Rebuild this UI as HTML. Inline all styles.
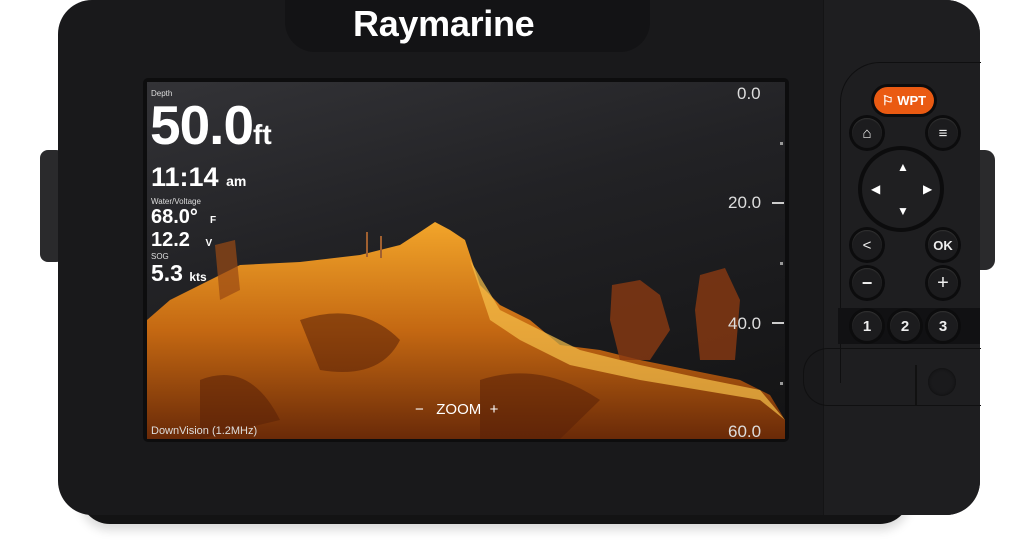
<!DOCTYPE html>
<html><head><meta charset="utf-8"><style>
body{margin:0;width:1024px;height:558px;background:#fff;position:relative;overflow:hidden;font-family:"Liberation Sans",sans-serif}
.a{position:absolute}
.btn{position:absolute;width:30px;height:30px;border-radius:50%;background:#1c1c1e;box-shadow:0 0 0 3px #0c0c0d,inset 0 1px 1px #333;color:#eee;font-weight:bold;font-size:15px;display:flex;align-items:center;justify-content:center}
.t{position:absolute;color:#fff;font-weight:bold;line-height:1}
.sc{position:absolute;color:#ddd;font-size:17px;line-height:1}
</style></head><body>
<div class="a" style="left:40px;top:150px;width:24px;height:112px;background:#2a2a2c;border-radius:8px"></div>
<div class="a" style="left:968px;top:150px;width:27px;height:120px;background:#2a2a2c;border-radius:10px"></div>
<div class="a" style="left:80px;top:480px;width:830px;height:44px;background:#131314;border-radius:0 0 30px 30px;box-shadow:0 6px 10px rgba(0,0,0,.15)"></div>
<div class="a" style="left:58px;top:0;width:922px;height:515px;background:#19191b;border-radius:34px"></div>
<div class="a" style="left:823px;top:0;width:157px;height:515px;background:#1e1e20;border-radius:0 34px 34px 0"></div>
<div class="a" style="left:823px;top:0;width:1px;height:515px;background:#141415"></div>
<div class="a" style="left:840px;top:62px;width:140px;height:320px;border-left:1px solid #0f0f10;border-top:1px solid #0f0f10;border-radius:40px 0 0 0"></div>
<div class="a" style="left:838px;top:308px;width:142px;height:36px;background:#111113"></div>
<div class="a" style="left:803px;top:348px;width:177px;height:56px;border:1px solid #101011;border-right:none;border-radius:25px 0 0 25px"></div>
<div class="a" style="left:915px;top:365px;width:2px;height:40px;background:#111"></div>
<div class="a" style="left:928px;top:368px;width:28px;height:28px;border-radius:50%;background:#1a1a1c;box-shadow:inset 0 0 3px #0c0c0c"></div>
<div class="a" style="left:285px;top:0;width:365px;height:52px;background:#131315;border-radius:0 0 30px 30px"></div>
<div class="t" style="left:353px;top:6px;font-size:36px;letter-spacing:-0.3px">Raymarine</div>
<div class="a" style="left:143px;top:78px;width:646px;height:364px;background:#0d0d0e;border-radius:5px"></div>
<div class="a" style="left:147px;top:82px;width:638px;height:357px;overflow:hidden;background:linear-gradient(165deg,#333337,#222225 40%,#131314 100%)">
<svg width="638" height="357" viewBox="147 82 638 357" style="position:absolute;left:0;top:0">
<defs><linearGradient id="g" x1="0" y1="0" x2="0" y2="1"><stop offset="0" stop-color="#f2a52a"/><stop offset=".5" stop-color="#c46812"/><stop offset="1" stop-color="#6a2a08"/></linearGradient></defs>
<path d="M147 320 L170 300 L200 285 L240 265 L300 262 L360 255 L400 245 L420 232 L435 222 L450 230 L465 240 L480 285 L500 305 L530 320 L560 345 L600 350 L640 360 L700 372 L740 380 L770 395 L785 420 L785 439 L147 439Z" fill="url(#g)"/>
<path d="M470 260 L500 310 L540 330 L580 350 L640 365 L700 378 L760 390 L785 420 L760 400 L700 390 L640 380 L570 365 L520 340 L490 320Z" fill="#f7c04a" opacity=".7"/>
<path d="M300 320 Q360 300 400 340 Q380 380 320 370Z M480 380 Q540 360 600 400 L560 439 L480 439Z M200 380 Q250 360 280 420 L200 439Z" fill="#5a2008" opacity=".55"/>
<path d="M612 285 L640 280 L660 295 L670 330 L650 360 L620 360 L610 320Z M700 275 L725 268 L740 300 L735 360 L700 360 L695 310Z" fill="#8a3a12" opacity=".8"/>
<path d="M215 245 L235 240 L240 290 L220 300Z" fill="#9a4a14" opacity=".7"/>
<rect x="366" y="232" width="2" height="25" fill="#a06030"/><rect x="380" y="236" width="2" height="22" fill="#a06030"/>
</svg>
<div class="a" style="left:4px;top:7px;color:#ddd;font-size:8px">Depth</div>
<div class="t" style="left:3px;top:16px;font-size:55px;letter-spacing:-1px">50.0<span style="font-size:28px;letter-spacing:0">ft</span></div>
<div class="t" style="left:4px;top:82px;font-size:27px">11:14 <span style="font-size:14px">am</span></div>
<div class="a" style="left:4px;top:115px;color:#ddd;font-size:8px">Water/Voltage</div>
<div class="t" style="left:4px;top:125px;font-size:20px">68.0°<span style="font-size:10px;margin-left:12px">F</span></div>
<div class="t" style="left:4px;top:148px;font-size:20px">12.2 <span style="font-size:10px;margin-left:10px">V</span></div>
<div class="a" style="left:4px;top:170px;color:#ddd;font-size:8px">SOG</div>
<div class="t" style="left:4px;top:180px;font-size:23px">5.3 <span style="font-size:12px">kts</span></div>
<div class="a" style="left:4px;top:343px;color:#ddd;font-size:11px">DownVision (1.2MHz)</div>
<div class="t" style="left:268px;top:320px;font-size:15px;font-weight:normal">−&nbsp;&nbsp;&nbsp;ZOOM&nbsp;&nbsp;+</div>
<div class="sc" style="top:3px;left:590px">0.0</div>
<div class="sc" style="top:112px;left:581px">20.0</div>
<div class="sc" style="top:233px;left:581px">40.0</div>
<div class="sc" style="top:341px;left:581px">60.0</div>
<div class="a" style="left:625px;top:120px;width:12px;height:2px;background:#ccc"></div>
<div class="a" style="left:625px;top:240px;width:12px;height:2px;background:#ccc"></div>
<div class="a" style="left:633px;top:60px;width:3px;height:3px;background:#999"></div>
<div class="a" style="left:633px;top:180px;width:3px;height:3px;background:#999"></div>
<div class="a" style="left:633px;top:300px;width:3px;height:3px;background:#999"></div>
</div>
<div class="a" style="left:874px;top:87px;width:60px;height:27px;border-radius:14px;background:#ea5a12;box-shadow:0 0 0 3px #0c0c0d;color:#fff;font-weight:bold;font-size:13px;display:flex;align-items:center;justify-content:center">⚐&nbsp;WPT</div>
<div class="btn" style="left:852px;top:118px">⌂</div>
<div class="btn" style="left:928px;top:118px">≡</div>
<div class="a" style="left:862px;top:150px;width:78px;height:78px;border-radius:50%;background:#1f1f21;box-shadow:0 0 0 4px #0c0c0d"></div>
<div class="a" style="left:880px;top:160px;width:45px;height:60px;color:#fff;font-size:12px">
<span class="a" style="left:17px;top:0">▲</span><span class="a" style="left:17px;top:44px">▼</span><span class="a" style="left:-9px;top:22px">◀</span><span class="a" style="left:43px;top:22px">▶</span></div>
<div class="btn" style="left:852px;top:230px;font-weight:normal">&lt;</div>
<div class="btn" style="left:928px;top:230px;font-size:13px">OK</div>
<div class="btn" style="left:852px;top:268px;font-size:18px">−</div>
<div class="btn" style="left:928px;top:268px;font-size:20px;font-weight:normal">+</div>
<div class="btn" style="left:852px;top:311px">1</div>
<div class="btn" style="left:890px;top:311px">2</div>
<div class="btn" style="left:928px;top:311px">3</div>
</body></html>
